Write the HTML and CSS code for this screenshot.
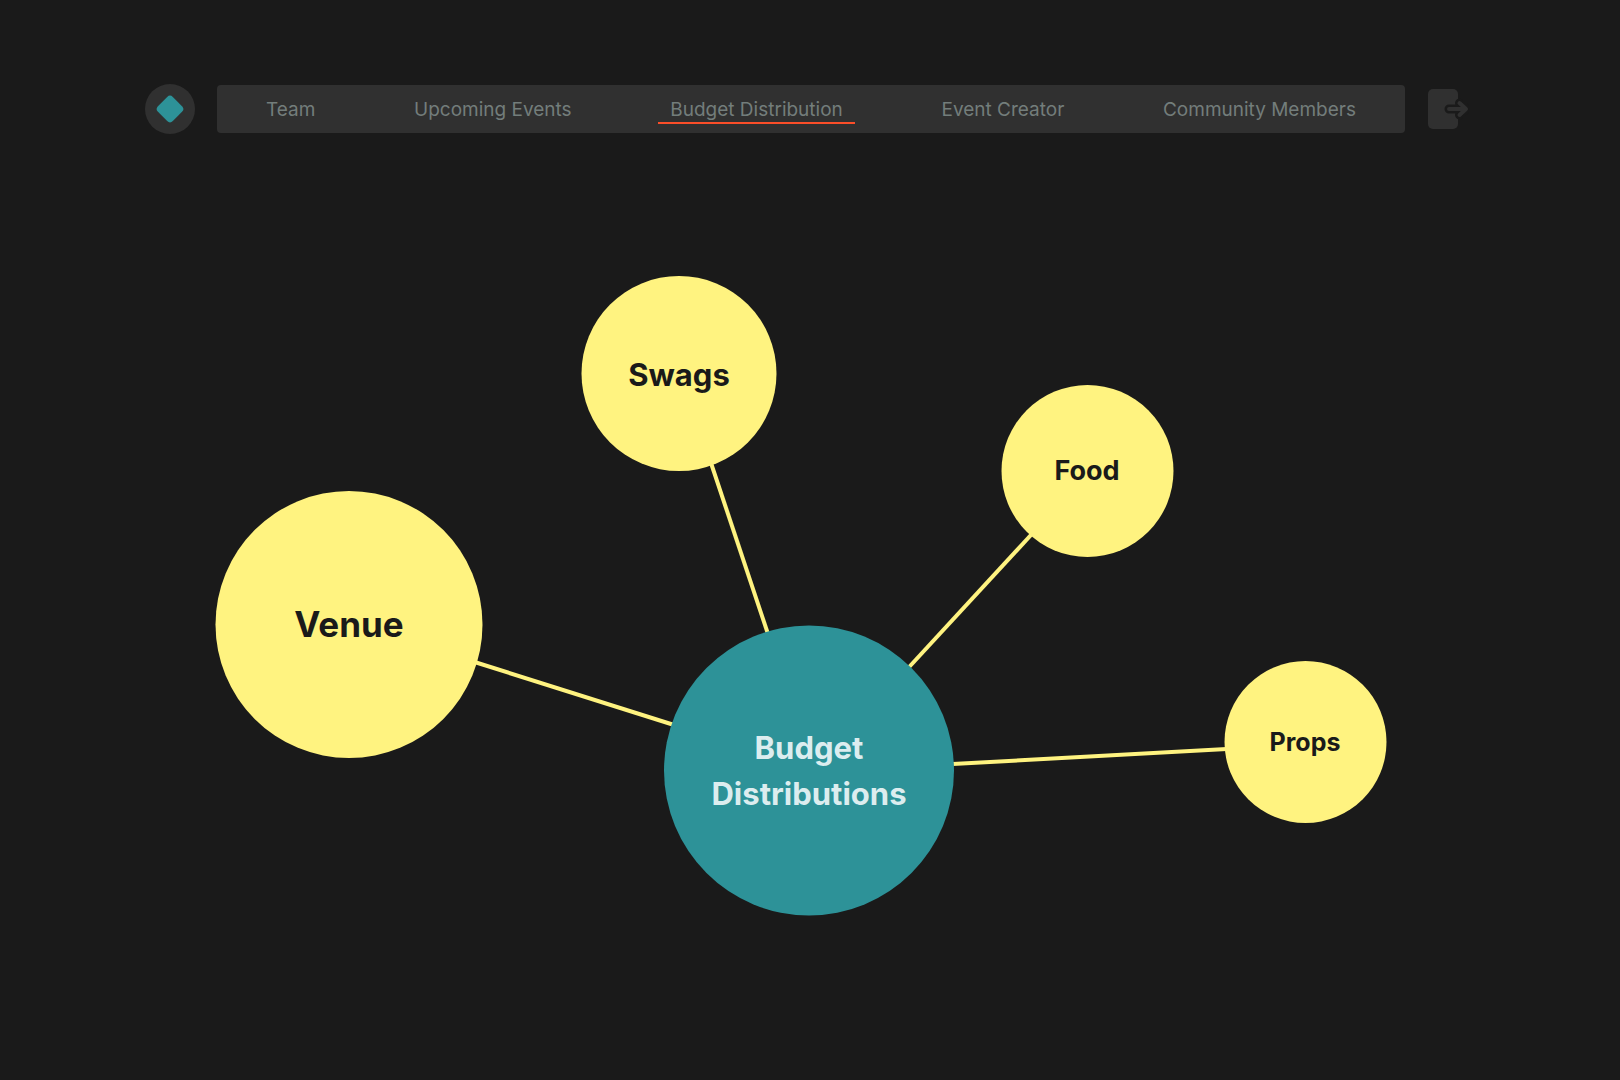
FILE: index.html
```html
<!DOCTYPE html>
<html lang="en">
<head>
    <meta charset="UTF-8">
    <meta name="viewport" content="width=device-width, initial-scale=1.0">
    <title>Budget Distribution</title>
    <link rel="stylesheet" href="styles.css">
</head>
<body>

    <div class="page">
        <header class="header">
            <a href="#" class="logo" aria-label="Home">
                <svg width="30" height="30" viewBox="0 0 30 30">
                    <rect x="4.5" y="4.5" width="21" height="21" rx="4" transform="rotate(45 15 15)"/>
                </svg>
            </a>
            <nav class="navbar">
                <a href="#" class="nav-link">Team</a>
                <a href="#" class="nav-link">Upcoming Events</a>
                <a href="#" class="nav-link active">Budget Distribution</a>
                <a href="#" class="nav-link">Event Creator</a>
                <a href="#" class="nav-link">Community Members</a>
            </nav>
            <button class="logout-button" aria-label="Log out">
                <svg width="42" height="42" viewBox="0 0 42 42">
                    <rect class="door" x="1" y="1" width="30" height="40" rx="5"/>
                    <path class="arrow-gap" d="M22 21H36M32.5 15L39 21L32.5 27"/>
                    <path class="arrow" d="M22 21H36M32.5 15L39 21L32.5 27"/>
                </svg>
            </button>
        </header>

        <main>
            <svg class="diagram" viewBox="0 0 1324 640">
                <g class="links">
                    <line x1="312" y1="380.5" x2="545" y2="454"/>
                    <line x1="562" y1="175" x2="627" y2="370"/>
                    <line x1="897" y1="247" x2="754" y2="402"/>
                    <line x1="1100" y1="472" x2="789" y2="489"/>
                </g>
                <g class="node">
                    <circle cx="204" cy="348.5" r="133.5"/>
                    <text class="text-xl" x="204" y="361">Venue</text>
                </g>
                <g class="node">
                    <circle cx="534" cy="97.5" r="97.5"/>
                    <text class="text-lg" x="534" y="110">Swags</text>
                </g>
                <g class="node">
                    <circle cx="942.5" cy="195" r="86"/>
                    <text class="text-md" x="942" y="204">Food</text>
                </g>
                <g class="node">
                    <circle cx="1160.5" cy="466" r="81"/>
                    <text class="text-sm" x="1160" y="475">Props</text>
                </g>
                <g class="node node-main">
                    <circle cx="664" cy="494.5" r="145"/>
                    <text class="text-lg" x="664" y="483">Budget</text>
                    <text class="text-lg" x="664" y="529">Distributions</text>
                </g>
            </svg>
        </main>
    </div>

</body>
</html>
```

FILE: styles.css
```css
body {
    font-family: 'Inter', sans-serif;
    background-color: #1a1a1a;
    margin: 0;
    padding: 0;
}
.page {
    padding: 84px 151px 0 145px;
}
.header {
    display: flex;
    align-items: center;
    gap: 22px;
}
.logo {
    display: flex;
    align-items: center;
    justify-content: center;
    flex-shrink: 0;
    width: 50px;
    height: 50px;
    border-radius: 50%;
    background-color: #303030;
}
.logo rect {
    fill: #2d9298;
}
.navbar {
    flex: 1;
    display: flex;
    align-items: center;
    justify-content: space-between;
    height: 48px;
    padding: 0 37px;
    box-sizing: border-box;
    border-radius: 4px;
    background-color: #303030;
}
.nav-link {
    padding: 4px 12px 0;
    font-size: 19px;
    line-height: 24px;
    color: #737d7b;
    text-decoration: none;
    white-space: nowrap;
    border-bottom: 2px solid transparent;
}
.nav-link:hover {
    color: #dcedef;
}
.nav-link.active {
    border-bottom-color: #fb4e29;
}
.logout-button {
    display: flex;
    flex-shrink: 0;
    padding: 0;
    border: none;
    background: none;
    cursor: pointer;
}
.door {
    fill: #303030;
}
.arrow, .arrow-gap {
    fill: none;
    stroke-linecap: round;
    stroke-linejoin: round;
}
.arrow {
    stroke: #303030;
    stroke-width: 4;
}
.arrow-gap {
    stroke: #1a1a1a;
    stroke-width: 9;
}

/* Budget diagram */
.diagram {
    display: block;
    width: 100%;
    margin-top: 142px;
}
.links {
    stroke: #fff380;
    stroke-width: 4;
}
.node circle {
    fill: #fff380;
}
.node text {
    fill: #1a1a1a;
    font-weight: 700;
    text-anchor: middle;
}
.node-main circle {
    fill: #2d9298;
}
.node-main text {
    fill: #dcedef;
}
.text-xl {
    font-size: 35px;
}
.text-lg {
    font-size: 31px;
}
.text-md {
    font-size: 27px;
}
.text-sm {
    font-size: 25px;
}
```
